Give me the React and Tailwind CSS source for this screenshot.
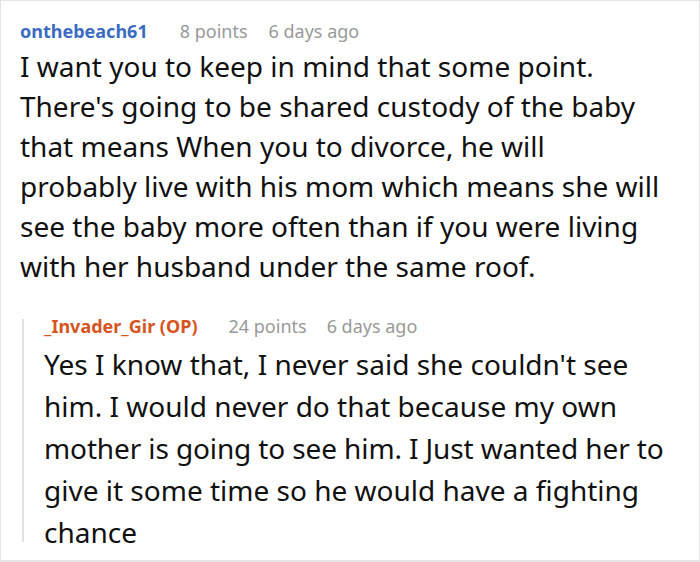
const first = [
  'I want you to keep in mind that some point.',
  "There's going to be shared custody of the baby",
  'that means When you to divorce, he will',
  'probably live with his mom which means she will',
  'see the baby more often than if you were living',
  'with her husband under the same roof.',
];

const reply = [
  "Yes I know that, I never said she couldn't see",
  'him. I would never do that because my own',
  'mother is going to see him. I Just wanted her to',
  'give it some time so he would have a fighting',
  'chance',
];

export default function App() {
  return (
    <div
      className="w-[700px] h-[562px] bg-white border border-b-2 border-[#e5e5e5] overflow-hidden"
      style={{ fontFamily: '"Noto Sans", "Open Sans", sans-serif' }}
    >
      <div className="pl-[19px] pt-[16px]">
        <div className="flex items-center gap-[32px] text-[18px] leading-[28px]">
          <span className="font-bold text-[#3b6cc2]">onthebeach61</span>
          <div className="flex gap-[21px] text-[#999999]">
            <span>8 points</span>
            <span>6 days ago</span>
          </div>
        </div>
        <div className="text-[28px] leading-[40px] text-[#111111] mt-[1px]">
          {first.map((l) => (
            <div key={l} className="whitespace-nowrap">{l}</div>
          ))}
        </div>
      </div>
      <div className="flex ml-[21px] mt-[26px]">
        <div className="w-[2px] bg-[#e2e2e2] mt-[7px] mb-[11px] shrink-0" />
        <div className="pl-[20px]">
          <div className="flex items-center gap-[31px] text-[18px] leading-[28px]">
            <span className="font-bold text-[#d6541e]">_Invader_Gir (OP)</span>
            <div className="flex gap-[20px] text-[#999999]">
              <span>24 points</span>
              <span>6 days ago</span>
            </div>
          </div>
          <div className="text-[28px] leading-[42px] text-[#111111] mt-[3px]">
            {reply.map((l, i) => (
              <div key={l} className={i === 2 ? 'whitespace-nowrap tracking-[-0.12px]' : 'whitespace-nowrap'}>{l}</div>
            ))}
          </div>
        </div>
      </div>
    </div>
  );
}
